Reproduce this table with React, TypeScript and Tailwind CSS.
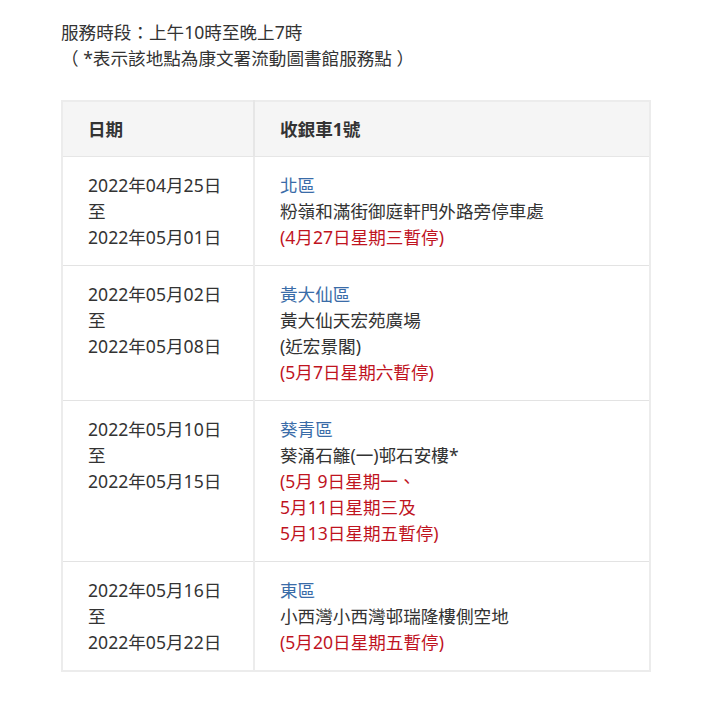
const ROWS = [
  {
    from: '2022年04月25日',
    to: '2022年05月01日',
    district: '北區',
    place: ['粉嶺和滿街御庭軒門外路旁停車處'],
    notes: ['(4月27日星期三暫停)'],
  },
  {
    from: '2022年05月02日',
    to: '2022年05月08日',
    district: '黃大仙區',
    place: ['黃大仙天宏苑廣場', '(近宏景閣)'],
    notes: ['(5月7日星期六暫停)'],
  },
  {
    from: '2022年05月10日',
    to: '2022年05月15日',
    district: '葵青區',
    place: ['葵涌石籬(一)邨石安樓*'],
    notes: ['(5月 9日星期一、', '5月11日星期三及', '5月13日星期五暫停)'],
  },
  {
    from: '2022年05月16日',
    to: '2022年05月22日',
    district: '東區',
    place: ['小西灣小西灣邨瑞隆樓側空地'],
    notes: ['(5月20日星期五暫停)'],
  },
];

export default function App() {
  return (
    <div
      className="min-h-screen bg-white px-[61px] pt-[19px] text-[17.6px] leading-[26px] text-[#333]"
      style={{ fontFamily: '"Noto Sans", "Noto Sans CJK TC", sans-serif' }}
    >
      <p>服務時段：上午10時至晚上7時</p>
      <p>（ *表示該地點為康文署流動圖書館服務點 ）</p>

      <table className="mt-[29px] w-[590px] border-collapse border-2 border-[#ececec]">
        <thead>
          <tr className="bg-[#f5f5f5]">
            <th className="w-[192px] border-r-2 border-b border-[#e6e6e6] px-[25px] py-[14px] text-left font-bold">日期</th>
            <th className="border-b border-[#e6e6e6] px-[25px] py-[14px] text-left font-bold">收銀車1號</th>
          </tr>
        </thead>
        <tbody>
          {ROWS.map(r => (
            <tr key={r.from} className="border-b border-[#e3e3e3] align-top">
              <td className="border-r-2 border-[#ececec] px-[25px] py-[15px]">
                <div>{r.from}</div>
                <div>至</div>
                <div>{r.to}</div>
              </td>
              <td className="px-[25px] py-[15px]">
                <div className="text-[#3a6ca8]">{r.district}</div>
                {r.place.map(p => (
                  <div key={p}>{p}</div>
                ))}
                {r.notes.map(n => (
                  <div key={n} className="text-[#c0141f]">{n}</div>
                ))}
              </td>
            </tr>
          ))}
        </tbody>
      </table>
    </div>
  );
}
